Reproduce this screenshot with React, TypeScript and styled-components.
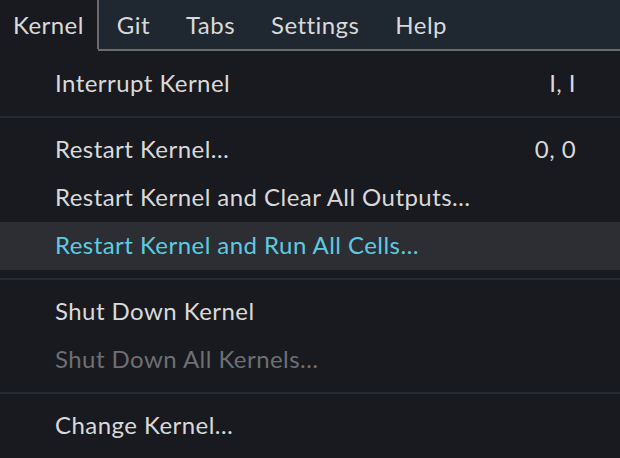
import React from 'react';
import styled, { createGlobalStyle } from 'styled-components';

interface IMenuItem {
  label: string;
  shortcut?: string;
  disabled?: boolean;
  active?: boolean;
}

type MenuEntry = IMenuItem | 'separator';

const GlobalStyle = createGlobalStyle`
  html, body {
    margin: 0;
    padding: 0;
    background: #181a1f;
    overflow: hidden;
  }

  body {
    font-family: Lato, 'Open Sans', sans-serif;
    letter-spacing: 0.45px;
  }
`;

const Page = styled.div`
  width: 620px;
  height: 458px;
  overflow: hidden;
  display: flex;
  flex-direction: column;
`;

const MenuBar = styled.div`
  display: flex;
  height: 49px;
  background: #1f2731;
  flex-shrink: 0;
`;

const MenuBarItem = styled.div<{ $active?: boolean; $first?: boolean }>`
  display: flex;
  align-items: center;
  height: 100%;
  padding: 0 ${({ $active }) => ($active ? '13px' : '18px')} 0
    ${({ $first }) => ($first ? '13px' : '18px')};
  font-size: 24px;
  color: #d9d9d9;
  background: ${({ $active }) => ($active ? '#181a1f' : 'transparent')};
  border-right: ${({ $active }) => ($active ? '2px solid #6b6b6b' : 'none')};
  box-sizing: content-box;
`;

const BarRest = styled.div`
  flex: 1;
`;

const Dropdown = styled.div`
  flex: 1;
  display: flex;
  flex-direction: column;
  padding-top: 11px;
  background: #181a1f;
  position: relative;

  /* top border starts where the active menu item ends */
  &::before {
    content: '';
    position: absolute;
    top: 0;
    left: 98px;
    right: 0;
    height: 2px;
    background: #6b6b6b;
  }
`;

const Row = styled.div<{ $active?: boolean; $disabled?: boolean }>`
  box-sizing: border-box;
  display: flex;
  align-items: center;
  justify-content: space-between;
  height: 48px;
  padding: 0 44px 3px 55px;
  font-size: 24px;
  background: ${({ $active }) => ($active ? '#2c2e33' : 'transparent')};
  color: ${({ $active, $disabled }) =>
    $active ? '#5ccbe0' : $disabled ? '#6e6f72' : '#d9d9d9'};
`;

const Shortcut = styled.span`
  color: #d9d9d9;
`;

const Separator = styled.div`
  height: 2px;
  margin: 8px 0;
  background: #232b35;
`;

const menus = ['Kernel', 'Git', 'Tabs', 'Settings', 'Help'];

const entries: MenuEntry[] = [
  { label: 'Interrupt Kernel', shortcut: 'I, I' },
  'separator',
  { label: 'Restart Kernel…', shortcut: '0, 0' },
  { label: 'Restart Kernel and Clear All Outputs…' },
  { label: 'Restart Kernel and Run All Cells…', active: true },
  'separator',
  { label: 'Shut Down Kernel' },
  { label: 'Shut Down All Kernels…', disabled: true },
  'separator',
  { label: 'Change Kernel…' },
];

const App = () => {
  return (
    <>
      <GlobalStyle />
      <Page>
        <MenuBar>
          {menus.map((m, i) => (
            <MenuBarItem key={m} $active={i === 0} $first={i === 0}>
              {m}
            </MenuBarItem>
          ))}
          <BarRest />
        </MenuBar>

        <Dropdown>
          {entries.map((e, i) =>
            e === 'separator' ? (
              <Separator key={i} />
            ) : (
              <Row key={i} $active={e.active} $disabled={e.disabled}>
                <span>{e.label}</span>
                {e.shortcut && <Shortcut>{e.shortcut}</Shortcut>}
              </Row>
            )
          )}
        </Dropdown>
      </Page>
    </>
  );
};

export default App;
